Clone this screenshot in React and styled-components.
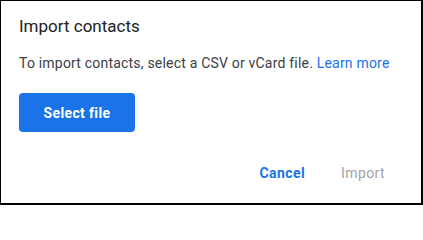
import React from 'react';
import styled, { createGlobalStyle } from 'styled-components';

const Global = createGlobalStyle`
  html, body {
    margin: 0;
    padding: 0;
    background: #fff;
  }
`;

const Dialog = styled.div`
  box-sizing: border-box;
  width: 423px;
  height: 205px;
  border: 1px solid #000;
  border-right-width: 2px;
  border-bottom-width: 2px;
  background: #fff;
  display: flex;
  flex-direction: column;
  padding: 13px 0 0 18px;
  font-family: Roboto, "Liberation Sans", sans-serif;
`;

const Title = styled.h2`
  margin: 0;
  font-size: 17px;
  line-height: 24px;
  font-weight: 400;
  color: #202124;
`;

const Body = styled.p`
  margin: 15px 0 0;
  font-size: 14px;
  line-height: 20px;
  letter-spacing: 0.2px;
  color: #3c4043;
`;

const Link = styled.a`
  color: #1a73e8;
  text-decoration: none;
`;

const PrimaryButton = styled.button`
  align-self: flex-start;
  margin-top: 20px;
  width: 116px;
  height: 39px;
  border: none;
  border-radius: 4px;
  background: #1a73e8;
  color: #fff;
  font-family: Roboto, "Liberation Sans", sans-serif;
  font-size: 14px;
  font-weight: 700;
  letter-spacing: 0.35px;
`;

const Footer = styled.div`
  margin-top: auto;
  display: flex;
  justify-content: flex-end;
  gap: 12px;
  padding: 0 24px 14px 0;
`;

const TextButton = styled.button`
  border: none;
  background: none;
  padding: 8px 12px;
  font-family: Roboto, "Liberation Sans", sans-serif;
  font-size: 14px;
  letter-spacing: 0.4px;
  font-weight: ${p => (p.disabled ? 400 : 700)};
  color: ${p => (p.disabled ? '#a0a3a7' : '#1a73e8')};
`;

export default function App() {
  return (
    <>
      <Global />
      <Dialog>
        <Title>Import contacts</Title>
        <Body>
          To import contacts, select a CSV or vCard file. <Link href="#">Learn more</Link>
        </Body>
        <PrimaryButton>Select file</PrimaryButton>
        <Footer>
          <TextButton>Cancel</TextButton>
          <TextButton disabled>Import</TextButton>
        </Footer>
      </Dialog>
    </>
  );
}
